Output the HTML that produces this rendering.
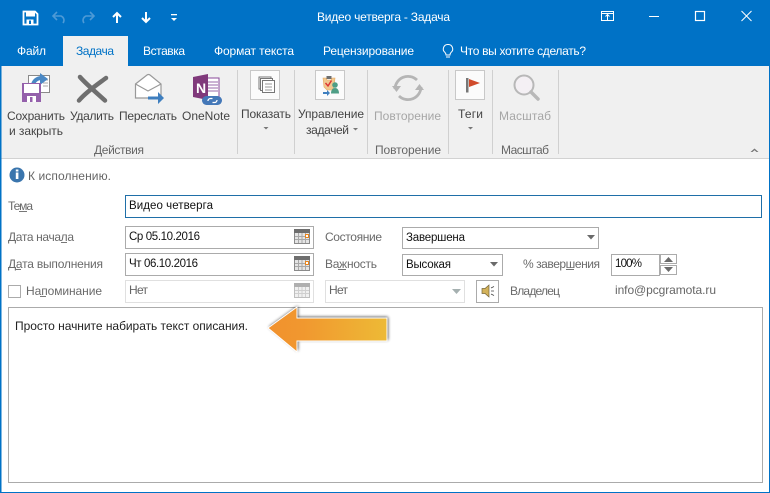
<!DOCTYPE html>
<html><head><meta charset="utf-8"><style>
html,body{margin:0;padding:0;background:#fff;width:770px;height:493px;overflow:hidden}
svg{display:block}
text{font-family:"Liberation Sans",sans-serif;font-size:12px;fill:#444}
.w{fill:#fff}.l{fill:#6a6a6a}.d{fill:#111;font-size:11.5px}.g{fill:#a6a6a6}.n{fill:#666}.gl{fill:#666}
</style></head><body>
<svg width="770" height="493" viewBox="0 0 770 493" xmlns="http://www.w3.org/2000/svg">
<defs>
<linearGradient id="ar" x1="0" x2="1" y1="0" y2="0"><stop offset="0" stop-color="#f1912e"/><stop offset="0.3" stop-color="#f1982f"/><stop offset="1" stop-color="#edba36"/></linearGradient>
<filter id="sh" x="-20%" y="-30%" width="140%" height="160%"><feGaussianBlur stdDeviation="1.600"/></filter>
<g id="cal"><rect x=".5" y=".5" width="15" height="14" fill="#e4e4e4" stroke="#8a8a8a"/><rect x="0" y="0" width="16" height="4" fill="#6e6e6e"/><path d="M1 7.500H15M1 10.500H15M4.500 4V14M8 4V14M11.500 4V14" stroke="#a8a8a8" stroke-width="1" fill="none"/></g>
</defs>

<!-- window frame -->
<rect width="770" height="493" fill="#fff"/>
<rect x="0" y="0" width="770" height="66" fill="#0072c6"/>
<rect x="0" y="66" width="1.500" height="427" fill="#0072c6"/>
<rect x="769" y="66" width="1" height="427" fill="#0072c6"/>
<rect x="0" y="492" width="770" height="1" fill="#0072c6"/>

<!-- ribbon -->
<rect x="1.500" y="66" width="767.500" height="92" fill="#f0f0f0"/>
<rect x="1.500" y="158" width="767.500" height="1" fill="#d2d2d2"/>
<rect x="63" y="36" width="65" height="30" fill="#f0f0f0"/>

<!-- QAT -->
<g fill="none" stroke="#fff">
<path d="M23.500 11.500H35L37.500 14V24.500H23.500Z" stroke-width="1.800"/>
<rect x="26" y="12" width="9" height="4.500" fill="#fff" stroke="none"/>
<rect x="26.500" y="19.500" width="7" height="5" fill="#fff" stroke="none"/>
<rect x="29" y="20.500" width="2" height="3.500" fill="#0072c6" stroke="none"/>
<g stroke="#4d9ad6" stroke-width="1.600"><path d="M57 12L53 16L57 20"/><path d="M53.500 16H61A4.500 4.500 0 0 1 63 23"/><path d="M90 12L94 16L90 20"/><path d="M93.500 16H86A4.500 4.500 0 0 0 84 23"/></g>
<g stroke-width="2"><path d="M117 23V13M113 17L117 13L121 17"/><path d="M146 12V22M142 18L146 22L150 18"/></g>
</g>
<rect x="171" y="14" width="6" height="1.300" fill="#fff"/><path d="M171 18H177L174 21Z" fill="#fff"/>

<text x="317" y="21" class="w" textLength="133">Видео четверга - Задача</text>

<!-- window buttons -->
<g fill="none" stroke="#fff" stroke-width="1">
<rect x="601.500" y="11.500" width="12" height="9"/><path d="M601.500 13.500H613.500" stroke-width="1"/><path d="M607.500 20V15M605.500 16.500L607.500 14.500L609.500 16.500"/>
<path d="M649 16.500H659"/>
<rect x="695.500" y="11.500" width="9" height="9" stroke-width="1.200"/>
<path d="M741.500 11L751.500 21M751.500 11L741.500 21"/>
</g>

<!-- tabs -->
<text x="17" y="55" class="w" textLength="29">Файл</text>
<text x="76" y="55" style="fill:#0072c6" textLength="38">Задача</text>
<text x="143" y="55" class="w" textLength="42">Вставка</text>
<text x="214" y="55" class="w" textLength="80">Формат текста</text>
<text x="323" y="55" class="w" textLength="91">Рецензирование</text>
<path d="M448 44.500a4.500 4.500 0 0 1 3 8c-.8.8-1 1.500-1 2.500h-4c0-1-.2-1.700-1-2.500a4.500 4.500 0 0 1 3-8zM446 57h4" fill="none" stroke="#fff" stroke-width="1"/>
<text x="460" y="55" class="w" textLength="126">Что вы хотите сделать?</text>

<!-- separators -->
<g fill="#d0d0d0">
<rect x="237" y="70" width="1" height="84"/>
<rect x="294" y="70" width="1" height="84"/><rect x="367" y="70" width="1" height="84"/>
<rect x="448" y="70" width="1" height="84"/><rect x="492" y="70" width="1" height="84"/>
<rect x="558" y="70" width="1" height="84"/>
</g>

<!-- Save & close icon -->
<rect x="28.500" y="75.500" width="21" height="17" fill="#fff" stroke="#8a8a8a"/>
<path d="M43 80h5M43 83h5M43 86h5" stroke="#aaa"/>
<path d="M33 86c0-5 4-8 9-8" fill="none" stroke="#4a88c4" stroke-width="4"/>
<path d="M40 73l8 6-8 6z" fill="#4a88c4"/>
<rect x="22" y="83" width="19" height="19" fill="#9460ab"/>
<rect x="24" y="84" width="15" height="9" fill="#fff"/>
<rect x="27" y="96" width="9" height="6" fill="#fff"/><rect x="30" y="97" width="2.500" height="5" fill="#9460ab"/>

<!-- delete X -->
<path d="M80 77C86 84 98 94 105 100.500M106 78C98 84 86 92 79 100.500" fill="none" stroke="#6f6f6f" stroke-width="4.500" stroke-linecap="round"/>

<!-- forward -->
<path d="M135.500 84L147 75Q148.500 74 150 75L161 84V98H135.500Z" fill="#fff" stroke="#999" stroke-width="1.200"/>
<path d="M135.500 84L148 91L161 84" fill="none" stroke="#999" stroke-width="1.200"/>
<path d="M148 96.500H158V92L164 98L158 104V99.500H148Z" fill="#3f7fbf"/>

<!-- OneNote -->
<path d="M205 78H219V97H205Z" fill="#fff" stroke="#8a4a9a"/>
<path d="M208 82h10M208 85h10M208 88h10M208 91h10" stroke="#9a6aa8"/>
<path d="M193 77L208 74V100L193 97Z" fill="#80397b"/>
<text x="196" y="93" style="fill:#fff;font-weight:bold;font-size:14px">N</text>
<rect x="202" y="96" width="20" height="9" rx="4.500" fill="#4478b8"/>
<path d="M208 101a2.500 2.500 0 0 1 2.500-2.500h2M217 100a2.500 2.500 0 0 1-2.500 2.500h-2" stroke="#fff" stroke-width="1.300" fill="none"/>

<!-- box icons -->
<g fill="#fbfbfb" stroke="#c8c8c8"><rect x="250.500" y="70.500" width="29" height="29"/><rect x="315.500" y="70.500" width="29" height="29"/><rect x="455.500" y="70.500" width="29" height="29"/></g>
<g fill="none" stroke="#777" stroke-width="1"><rect x="259" y="77" width="12" height="12" fill="#fff"/><rect x="260.500" y="78.500" width="12" height="12" fill="#fff"/><rect x="262.500" y="80.500" width="12" height="12" fill="#fff"/><path d="M265 84h7M265 87h7M265 90h7" stroke="#999"/></g>

<!-- tasks icon -->
<path d="M323 78h3l1 2h4l1-2h3l-1 9-2 3h-5l-3-3z" fill="#f0c890" stroke="#e8a860" stroke-width=".6"/>
<rect x="326.500" y="76" width="5" height="3" fill="#6e6e6e"/>
<path d="M325.500 83l2.500 3 3.500-5.500" fill="none" stroke="#d33" stroke-width="1.400"/>
<circle cx="335" cy="85" r="2.800" fill="#4f9e86"/><path d="M331 93.500c0-4 2-5.500 4-5.500s4 1.500 4 5.500z" fill="#4f9e86"/>
<path d="M323 92h4v-2l3 3-3 3v-2h-4z" fill="#3f7fbf"/>

<!-- flag -->
<rect x="466" y="78" width="2.500" height="14.500" fill="#777"/>
<path d="M469 79L480 83L469 87Z" fill="#d04a2a"/>

<!-- repeat -->
<g fill="none" stroke="#b5b5b5" stroke-width="2.800"><path d="M395 89a13 13 0 0 1 22-9"/><path d="M421 87a13 13 0 0 1-22 9"/></g>
<path d="M392 86h9l-4.500 6zM415 90h9l-4.500-6z" fill="#b5b5b5"/>

<!-- magnifier -->
<circle cx="524" cy="85" r="9.500" fill="#f4f0f4" stroke="#b8b8b8" stroke-width="2"/>
<path d="M531 92L538 99" stroke="#b8b8b8" stroke-width="3.500" stroke-linecap="round"/>

<!-- ribbon labels -->
<text x="7" y="120" textLength="58">Сохранить</text>
<text x="9" y="135" textLength="54">и закрыть</text>
<text x="70" y="120" textLength="44">Удалить</text>
<text x="119" y="120" textLength="58">Переслать</text>
<text x="182" y="120" textLength="48">OneNote</text>
<text x="241" y="118" textLength="50">Показать</text>
<path d="M263.500 127h5l-2.500 2.500z" fill="#777"/>
<text x="298" y="118" textLength="66">Управление</text>
<text x="306" y="134" textLength="43">задачей</text>
<path d="M353 128h5l-2.500 2.500z" fill="#777"/>
<text x="374" y="120" class="g" textLength="67">Повторение</text>
<text x="458" y="118" textLength="25">Теги</text>
<path d="M468 127h5l-2.500 2.500z" fill="#777"/>
<text x="499" y="120" class="g" textLength="52">Масштаб</text>
<text x="94" y="154" class="gl" textLength="50">Действия</text>
<text x="375" y="154" class="gl" textLength="66">Повторение</text>
<text x="501" y="154" class="gl" textLength="48">Масштаб</text>
<path d="M750.500 152l4-3.500 4 3.500h-2l-2-1.800-2 1.800z" fill="#777"/>

<!-- info bar -->
<circle cx="17" cy="175" r="7.500" fill="#3a75ad"/>
<rect x="15.800" y="172.500" width="2.600" height="6.500" fill="#fff"/><rect x="15.800" y="169.500" width="2.600" height="2" fill="#fff"/>
<text x="28" y="180" class="n" textLength="83">К исполнению.</text>

<!-- form fields -->
<text x="8" y="210" class="l" textLength="25">Тема</text><rect x="19" y="211" width="8" height="1" fill="#777"/>
<rect x="125.500" y="195.500" width="636" height="22" fill="#fff" stroke="#1f6fa8"/>
<text x="129" y="209" class="d" textLength="84">Видео четверга</text>

<text x="8" y="241" class="l" textLength="66">Дата начала</text><rect x="61" y="242" width="6" height="1" fill="#777"/>
<rect x="125.500" y="226.500" width="188" height="22" fill="#fff" stroke="#ababab"/>
<text x="129" y="240" class="d" textLength="71">Ср 05.10.2016</text>
<use href="#cal" x="294" y="229"/><rect x="305.500" y="234.500" width="3" height="3" fill="#fff" stroke="#e8851e"/>

<text x="8" y="268" class="l" textLength="95">Дата выполнения</text><rect x="15" y="269" width="6" height="1" fill="#777"/>
<rect x="125.500" y="253.500" width="188" height="22" fill="#fff" stroke="#ababab"/>
<text x="129" y="267" class="d" textLength="69">Чт 06.10.2016</text>
<use href="#cal" x="294" y="256"/><rect x="305.500" y="261.500" width="3" height="3" fill="#fff" stroke="#e8851e"/>

<rect x="8.500" y="285.500" width="12" height="12" fill="#fff" stroke="#ababab"/>
<text x="26" y="295" class="l" textLength="76">Напоминание</text><rect x="40" y="296" width="6" height="1" fill="#777"/>
<rect x="125.500" y="280.500" width="188" height="22" fill="#fff" stroke="#e0e0e0"/>
<text x="129" y="294" class="n" textLength="19">Нет</text>
<g opacity=".55"><use href="#cal" x="294" y="283"/></g>

<text x="325" y="241" class="l" textLength="57">Состояние</text>
<rect x="402.500" y="227.500" width="196" height="21" fill="#fff" stroke="#ababab"/>
<text x="406" y="241" class="d" textLength="59">Завершена</text>
<path d="M587 235h8l-4 4.500z" fill="#6a6a6a"/>

<text x="325" y="268" class="l" textLength="52">Важность</text><rect x="338" y="269" width="8" height="1" fill="#777"/>
<rect x="402.500" y="254.500" width="100" height="21" fill="#fff" stroke="#ababab"/>
<text x="406" y="268" class="d" textLength="45">Высокая</text>
<path d="M490 262h8l-4 4.500z" fill="#6a6a6a"/>

<text x="523" y="268" class="l" textLength="77">% завершения</text><rect x="566" y="269" width="8" height="1" fill="#777"/>
<rect x="611.500" y="254.500" width="48" height="21" fill="#fff" stroke="#ababab"/>
<text x="615" y="267" class="d" textLength="27">100%</text>
<rect x="660.500" y="254.500" width="16" height="9" fill="#fff" stroke="#ababab"/>
<rect x="660.500" y="265.500" width="16" height="9" fill="#fff" stroke="#ababab"/>
<path d="M664 262l4.500-5 4.500 5z M664 267h9l-4.500 5z" fill="#6a6a6a"/>

<rect x="325.500" y="280.500" width="139" height="22" fill="#fff" stroke="#e0e0e0"/>
<text x="329" y="294" class="n" textLength="19">Нет</text>
<path d="M452 289h9l-4.500 5z" fill="#a5b0b0"/>

<rect x="476.500" y="280.500" width="22" height="22" fill="#fff" stroke="#ababab"/>
<path d="M482 288.500h3l4-3.500v12l-4-3.500h-3z" fill="#d3b25a" stroke="#76663a" stroke-width=".7"/>
<path d="M491 288l3-1.500M491 291h3M491 294l3 1.500" stroke="#444" stroke-width=".8"/>

<text x="510" y="295" class="l" textLength="50">Владелец</text>
<text x="615" y="294" class="n" textLength="101">info@pcgramota.ru</text>

<!-- body -->
<rect x="8.500" y="307.500" width="754" height="175" fill="#fff" stroke="#ababab"/>
<text x="15" y="330" style="fill:#222" textLength="233">Просто начните набирать текст описания.</text>

<!-- arrow -->
<path d="M268 328L297 307V318H387V341H297V352Z" transform="translate(1 -1)" fill="#000" opacity=".75" filter="url(#sh)"/>
<path d="M268 328L297 307V318H387V341H297V352Z" fill="url(#ar)" stroke="#fff" stroke-width="1"/>
</svg>
</body></html>
